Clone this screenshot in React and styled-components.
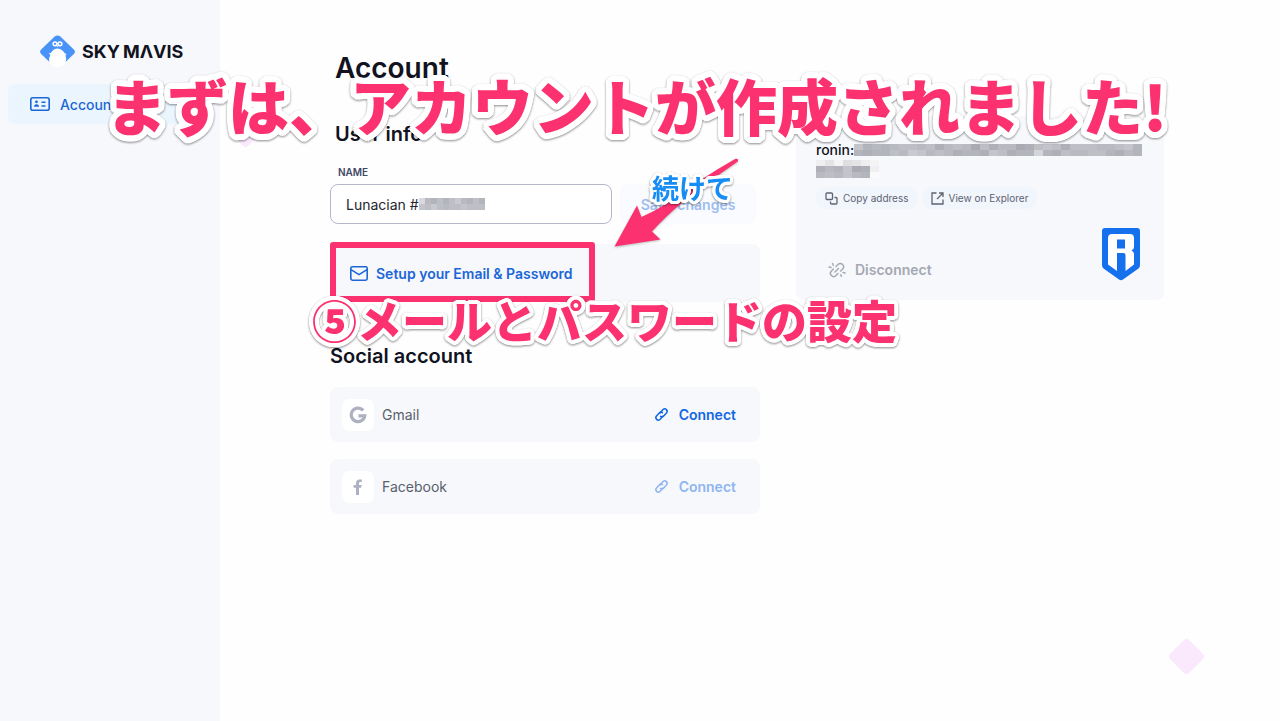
import React from "react";
import styled, { createGlobalStyle } from "styled-components";

const Global = createGlobalStyle`
  *, *::before, *::after { box-sizing: border-box; }
  body {
    margin: 0;
    background: #fefefe;
    color: #11131f;
    font-family: Inter, "Noto Sans CJK JP", sans-serif;
  }
  button, input { font-family: inherit; }
`;

const Page = styled.div`
  position: relative;
  display: flex;
  min-height: 100vh;
  overflow: hidden;
`;

const Sidebar = styled.aside`
  flex: 0 0 220px;
  padding: 32px 8px;
  background: #f7f8fc;
`;

const Brand = styled.a`
  display: flex;
  align-items: center;
  gap: 6px;
  height: 40px;
  padding-left: 31px;
  color: #11131f;
  text-decoration: none;
`;

const Wordmark = styled.span`
  display: flex;
  gap: 3px;
  font-size: 18px;
  line-height: 24px;
  font-weight: 700;
`;

const NavLink = styled.a`
  display: flex;
  align-items: center;
  gap: 10px;
  height: 40px;
  margin-top: 12px;
  padding-left: 22px;
  border-radius: 8px;
  background: #ebf5fe;
  color: #1c66d8;
  font-size: 14px;
  font-weight: 500;
  text-decoration: none;
`;

const Main = styled.main`
  flex: 1;
  min-width: 0;
  padding: 48px 116px 48px 110px;
`;

const Title = styled.h1`
  margin: 0 0 0 5px;
  font-size: 28px;
  line-height: 40px;
  font-weight: 600;
`;

const Columns = styled.div`
  display: grid;
  grid-template-columns: minmax(0, 430fr) minmax(0, 368fr);
  column-gap: 36px;
  align-items: start;
  margin-top: 32px;
`;

const SectionTitle = styled.h2`
  margin: 0;
  padding-left: ${(p) => (p.$inset ? "5px" : "0")};
  font-size: 20px;
  line-height: 28px;
  font-weight: 600;
`;

const NameForm = styled.form`
  display: grid;
  grid-template-columns: minmax(0, 1fr) 136px;
  gap: 4px 8px;
  margin-top: 16px;
  padding-right: 4px;
`;

const FieldLabel = styled.label`
  grid-column: 1 / -1;
  padding-left: 8px;
  color: #3f4866;
  font-size: 10px;
  line-height: 16px;
  font-weight: 600;
`;

const FieldBox = styled.div`
  display: flex;
  align-items: center;
  height: 40px;
  padding-left: 15px;
  border: 1px solid #b4b8c8;
  border-radius: 8px;
  background: #fff;
`;

const NameInput = styled.input`
  width: 73px;
  padding: 0;
  border: 0;
  outline: 0;
  background: none;
  color: #24262f;
  font-size: 14px;
`;

const SaveButton = styled.button`
  border: 0;
  border-radius: 8px;
  background: #fafbfe;
  color: #9dbdf0;
  font-size: 14px;
  font-weight: 600;
`;

const Panel = styled.div`
  display: flex;
  align-items: center;
  justify-content: space-between;
  height: ${(p) => p.$height};
  margin-top: ${(p) => p.$gap};
  padding: 0 24px 0 12px;
  border-radius: 8px;
  background: #f6f8fc;
`;

const TextButton = styled.button`
  display: flex;
  align-items: center;
  gap: ${(p) => p.$gap || "8px"};
  padding: 0;
  border: 0;
  background: none;
  color: ${(p) => p.$color};
  font-size: 14px;
  font-weight: 600;
`;

const SetupSlot = styled.div`
  padding-left: 8px;
`;

const Social = styled.section`
  margin-top: 40px;
`;

const Provider = styled.div`
  display: flex;
  align-items: center;
  gap: 8px;
  color: #5b5f6b;
  font-size: 14px;
`;

const Tile = styled.span`
  display: grid;
  place-items: center;
  width: 32px;
  height: 32px;
  border-radius: 8px;
  background: #fff;
`;

const Wallet = styled.section`
  height: 184px;
  margin-top: -4px;
  padding: 24px 24px 16px 20px;
  border-radius: 8px;
  background: #f6f8fc;
`;

const Address = styled.div`
  font-size: 14px;
  line-height: 20px;
  font-weight: 500;
`;

const AddressLine = styled.div`
  display: flex;
  align-items: center;
`;

const Mosaic = styled.span`
  display: grid;
  grid-template-columns: repeat(${(p) => p.$columns}, ${(p) => p.$cell || "9px"});
  grid-auto-rows: 6px;
`;

const Cell = styled.i`
  background: ${(p) => p.$tone};
`;

const Chips = styled.div`
  display: flex;
  gap: 4px;
  margin-top: 9px;
`;

const Chip = styled.button`
  display: flex;
  align-items: center;
  gap: 5px;
  height: 22px;
  padding: 0 9px;
  border: 0;
  border-radius: 11px;
  background: #f1f5fc;
  color: #5d6372;
  font-size: 10px;
`;

const WalletFoot = styled.div`
  display: flex;
  align-items: flex-end;
  justify-content: space-between;
  margin-top: 19px;
  padding-left: 12px;
`;

const DisconnectSlot = styled.div`
  height: 20px;
`;

const halo = (radius) => {
  const rings = [radius, Math.round(radius / 2)];
  return rings
    .flatMap((r) =>
      Array.from({ length: 24 }, (_, i) => {
        const a = (i * Math.PI) / 12;
        return `${(r * Math.cos(a)).toFixed(2)}px ${(r * Math.sin(a)).toFixed(2)}px 0 #fff`;
      })
    )
    .join(", ");
};

const Note = styled.p`
  position: absolute;
  left: ${(p) => p.$x}px;
  top: ${(p) => p.$y}px;
  margin: 0;
  color: ${(p) => p.$color || "#fb326f"};
  font-family: "Noto Sans CJK JP", sans-serif;
  font-size: ${(p) => p.$size}px;
  line-height: 1;
  font-weight: ${(p) => p.$weight || 900};
  white-space: nowrap;
  text-shadow: ${(p) => halo(p.$halo)};
  filter: drop-shadow(0 1px 1px rgba(0, 0, 0, 0.45));
`;

const Highlight = styled.div`
  position: absolute;
  left: 330px;
  top: 242px;
  width: 265px;
  height: 60px;
  border: 6px solid #fb326f;
  border-radius: 3px;
  pointer-events: none;
`;

const Arrow = styled.svg`
  position: absolute;
  left: 610px;
  top: 154px;
  pointer-events: none;
  filter: drop-shadow(0 1px 1px rgba(0, 0, 0, 0.25));
`;

const Diamond = styled.span`
  position: absolute;
  left: ${(p) => p.$x}px;
  top: ${(p) => p.$y}px;
  width: 27px;
  height: 27px;
  border-radius: 4px;
  background: #fae9fd;
  transform: rotate(45deg);
`;

const LinkIcon = () => (
  <svg width="15" height="15" viewBox="0 0 24 24" fill="none" stroke="currentColor" strokeWidth="2.4" strokeLinecap="round" strokeLinejoin="round">
    <path d="M9.500 9.500L14.500 4a3.900 3.900 0 0 1 5.500 5.500L15.500 14.500a3.900 3.900 0 0 1-5 .4" />
    <path d="M14.500 14.500L9.500 20A3.900 3.900 0 0 1 4 14.500L8.500 9.500a3.900 3.900 0 0 1 5-.4" />
  </svg>
);

const tones = (text) => text.split("").map((c) => `hsl(230 6% ${56 + parseInt(c, 36) * 2}%)`);

function Redacted({ columns, pattern, cell }) {
  return (
    <Mosaic $columns={columns} $cell={cell} aria-hidden="true">
      {tones(pattern).map((tone, i) => (
        <Cell key={i} $tone={tone} />
      ))}
    </Mosaic>
  );
}

export default function App() {
  return (
    <Page>
      <Global />
      <Sidebar>
        <Brand href="#">
          <svg width="37" height="34" viewBox="0 2 37 34">
            <path d="M15.7 3.500q2.800-2 5.600 0l13.800 13.200q1.600 2 0 4L26.500 29H10.500l-8.600-8.300q-1.600-2 0-4z" fill="#4893f8" />
            <path d="M9.500 20.500q2 .5 3.500-2Q15 15.500 18.500 15.500t6 3q1 2 3 2.500l-1 1.500q1.500 4 0 7Q24 34 18.500 34T10.500 29.500q-1.300-4 1-7.500z" fill="#fff" />
            <g fill="none" stroke="#fff" strokeWidth="1.500">
              <circle cx="16" cy="10.800" r="1.900" />
              <circle cx="21" cy="10.800" r="1.900" />
            </g>
            <path d="M17.300 12.500h2.400l-1.200 1.800z" fill="#fff" />
          </svg>
          <Wordmark>
            <span>SKY</span>
            <span>MΛVIS</span>
          </Wordmark>
        </Brand>
        <nav>
          <NavLink href="#account">
            <svg width="20" height="14" viewBox="0 0 20 14" fill="none" stroke="currentColor" strokeWidth="1.600">
              <rect x="0.800" y="0.800" width="18.400" height="12.400" rx="2" />
              <path d="M11.500 5.200h4M11.500 9h4" />
              <circle cx="6.500" cy="4.800" r="1.400" fill="currentColor" stroke="none" />
              <path d="M4 9.800q0-2.600 2.500-2.600T9 9.800z" fill="currentColor" stroke="none" />
            </svg>
            Account
          </NavLink>
        </nav>
      </Sidebar>

      <Main>
        <Title>Account</Title>
        <Columns>
          <div>
            <SectionTitle $inset>User info</SectionTitle>
            <NameForm onSubmit={(e) => e.preventDefault()}>
              <FieldLabel htmlFor="name">NAME</FieldLabel>
              <FieldBox>
                <NameInput id="name" defaultValue="Lunacian #" />
                <Redacted columns={11} cell="6px" pattern="f98a8ac98a8baca9aabaaa" />
              </FieldBox>
              <SaveButton type="submit">Save changes</SaveButton>
            </NameForm>
            <Panel $height="58px" $gap="20px">
              <SetupSlot>
                <TextButton $color="#1c66d8">
                  <svg width="18" height="15" viewBox="0 0 18 15" fill="none" stroke="currentColor" strokeWidth="1.600" strokeLinejoin="round">
                    <rect x="0.800" y="0.800" width="16.400" height="13.400" rx="1.600" />
                    <path d="M1 3.600l8 5 8-5" />
                  </svg>
                  Setup your Email &amp; Password
                </TextButton>
              </SetupSlot>
            </Panel>
            <Social>
              <SectionTitle>Social account</SectionTitle>
              <Panel $height="55px" $gap="17px">
                <Provider>
                  <Tile>
                    <svg width="18" height="18" viewBox="0 0 18 18" fill="none" stroke="#adb1c0" strokeWidth="3.200">
                      <path d="M14.200 4.400A6.800 6.800 0 1 0 15.800 9.800H9.400" />
                    </svg>
                  </Tile>
                  Gmail
                </Provider>
                <TextButton $color="#1267e4" $gap="10px"><LinkIcon />Connect</TextButton>
              </Panel>
              <Panel $height="55px" $gap="17px">
                <Provider>
                  <Tile>
                    <svg width="10" height="16" viewBox="0 0 10 16" fill="#adb1c0">
                      <path d="M3 16V8.800H.6V6H3V4.200C3 1.600 4.400.4 6.600.4 7.800.4 8.800.6 8.800.6V3H7.500C6.300 3 6 3.700 6 4.500V6h2.700l-.5 2.800H6V16z" />
                    </svg>
                  </Tile>
                  Facebook
                </Provider>
                <TextButton $color="#8fb5f1" $gap="10px"><LinkIcon />Connect</TextButton>
              </Panel>
            </Social>
          </div>

          <Wallet>
            <Address>
              <AddressLine>
                ronin:
                <Redacted columns={32} pattern="b8989aa9a79a96a79967aba7aaa99ab88788a9cb9a97887ba788e87a99aa8798" />
              </AddressLine>
              <Redacted columns={7} pattern="jhkghjk798b67j9a9b98l" />
            </Address>
            <Chips>
              <Chip>
                <svg width="13" height="13" viewBox="0 0 13 13" fill="none" stroke="currentColor" strokeWidth="1.300">
                  <rect x="1" y="1" width="6.500" height="6.500" rx="1" />
                  <path d="M9.500 5.500H11a1 1 0 0 1 1 1V11a1 1 0 0 1-1 1H6.500a1 1 0 0 1-1-1V9.500" />
                </svg>
                Copy address
              </Chip>
              <Chip>
                <svg width="13" height="13" viewBox="0 0 13 13" fill="none" stroke="currentColor" strokeWidth="1.300">
                  <path d="M5.500 1H1v11h11V7.500M8 1h4v4M12 1L6 7" />
                </svg>
                View on Explorer
              </Chip>
            </Chips>
            <WalletFoot>
              <DisconnectSlot>
                <TextButton $color="#a4a8b1" $gap="9px">
                  <svg width="18" height="16" viewBox="0 0 18 16" fill="none" stroke="currentColor" strokeWidth="1.400" strokeLinecap="round">
                    <path d="M8 4.500l2-2a3.200 3.200 0 0 1 4.600 4.600l-2 2M10 11.500l-2 2a3.200 3.200 0 0 1-4.600-4.600l2-2M7 10l3.500-3.500M1 5l2 .5M4.500 1.500l.8 1.800M17 11l-2-.5M13.500 14.500l-.8-1.800" />
                  </svg>
                  Disconnect
                </TextButton>
              </DisconnectSlot>
              <svg width="38" height="53" viewBox="0 0 38 53" role="img" aria-label="Ronin">
                <path d="M3 0h32q3 0 3 3v34q0 2-1.500 3.500L21 51.500q-2 1.500-4 0L1.500 40.500Q0 39 0 37V3q0-3 3-3z" fill="#1570ee" />
                <path d="M10 6h18q4 0 4 4v9q0 2.500-2.500 3.500 2.500 1 2.500 3.500v10.500L23.500 43V27q0-2-2-2H15v18l-9-6.500V10q0-4 4-4zm5 5.500v9h8v-9z" fill="#fff" fillRule="evenodd" />
              </svg>
            </WalletFoot>
          </Wallet>
        </Columns>
      </Main>

      <Diamond $x={232} $y={116} />
      <Diamond $x={1173} $y={643} />
      <Highlight />
      <Arrow width="135" height="100" viewBox="0 0 135 100">
        <path d="M4.500 92.500L27 51.500l4.500 11.500Q44 57.500 56 50 90 25 125.500 4.800q3.500-.5 2.300 2.600Q98 28 73 48 56 62 42 77.500l8.500 8z" fill="#fb326f" />
      </Arrow>
      <Note $x={106} $y={74} $size={61} $halo={6}>まずは、アカウントが作成されました!</Note>
      <Note $x={652} $y={174} $size={27} $halo={3} $weight={700} $color="#168cf5">続けて</Note>
      <Note $x={312} $y={297} $size={45} $halo={4}>⑤メールとパスワードの設定</Note>
    </Page>
  );
}
